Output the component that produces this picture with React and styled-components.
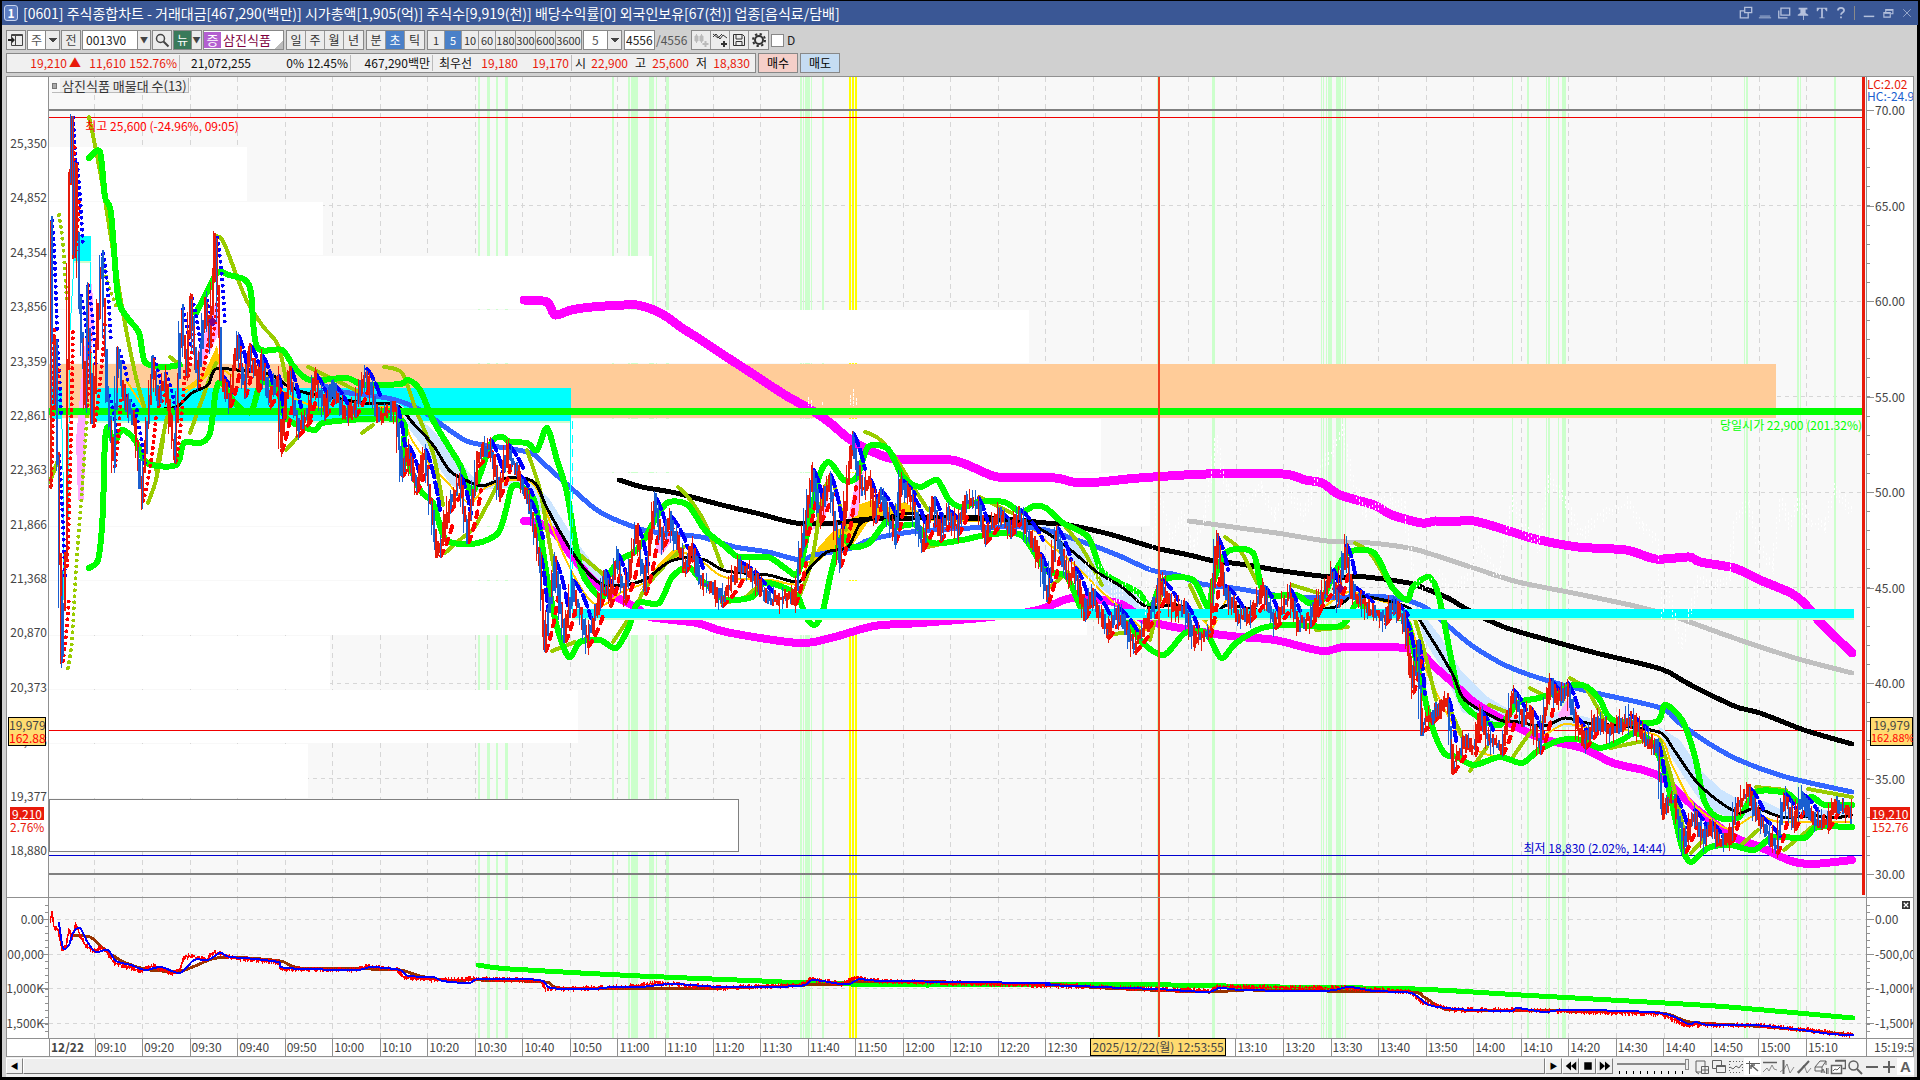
import React from 'react';
import styled, { createGlobalStyle } from 'styled-components';

const GlobalStyle = createGlobalStyle`
  * { box-sizing: border-box; }
  html, body { margin: 0; background: #000; }
  body, button, input, select {
    font-family: "Noto Sans CJK KR", "Liberation Sans", sans-serif;
    font-size: 12px;
    line-height: 16px;
    color: #222;
  }
  button, input, select { margin: 0; padding: 0; border-radius: 0; }
`;

// ---------- chart data ----------

const PRICE = [
  [50, 480], [51, 225], [54, 400], [56, 345], [58, 460], [62, 655], [66, 560], [70, 177], [72, 122], [74, 250],
  [76, 168], [80, 300], [86, 400], [87, 290], [93, 420], [102, 258], [108, 400], [114, 460], [118, 355],
  [125, 400], [135, 420], [142, 495], [153, 363], [158, 400], [165, 378], [175, 455], [182, 313], [187, 370],
  [191, 303], [198, 380], [206, 305], [210, 340], [216, 242], [222, 380], [230, 400], [238, 340], [245, 390],
  [250, 350], [258, 385], [262, 360], [270, 400], [278, 380], [281, 445], [290, 373], [298, 430], [308, 415],
  [315, 378], [325, 410], [333, 388], [345, 415], [355, 410], [366, 373], [378, 415], [396, 410], [402, 470],
  [408, 450], [416, 486], [425, 454], [437, 548], [440, 550], [450, 505], [460, 480], [468, 536], [478, 460],
  [490, 444], [500, 490], [508, 449], [520, 480], [530, 505], [540, 560], [545, 645], [555, 565], [565, 635],
  [573, 585], [588, 640], [600, 600], [605, 575], [610, 600], [617, 558], [625, 596], [637, 530], [645, 588],
  [655, 502], [663, 540], [670, 520], [685, 566], [692, 549], [700, 580], [712, 588], [722, 600], [740, 566],
  [755, 580], [770, 600], [795, 598], [803, 540], [813, 474], [820, 516], [830, 479], [840, 560], [853, 438],
  [862, 490], [870, 484], [875, 516], [880, 494], [895, 536], [901, 484], [912, 500], [923, 543], [934, 502],
  [940, 535], [948, 514], [958, 528], [966, 502], [978, 502], [985, 537], [998, 514], [1010, 530], [1020, 514],
  [1040, 558], [1048, 596], [1057, 532], [1068, 578], [1075, 572], [1085, 612], [1092, 594], [1108, 632],
  [1118, 612], [1135, 646], [1148, 622], [1162, 584], [1175, 610], [1185, 607], [1195, 641], [1210, 630],
  [1217, 541], [1225, 590], [1240, 618], [1250, 615], [1264, 591], [1275, 622], [1290, 594], [1297, 623],
  [1310, 620], [1318, 604], [1333, 574], [1338, 600], [1346, 549], [1352, 590], [1370, 610], [1385, 618],
  [1393, 604], [1405, 622], [1413, 686], [1418, 645], [1422, 726], [1435, 712], [1448, 703], [1453, 766],
  [1465, 742], [1475, 748], [1479, 714], [1490, 740], [1502, 748], [1513, 694], [1523, 720], [1530, 712],
  [1540, 747], [1550, 684], [1558, 700], [1567, 687], [1575, 720], [1585, 742], [1597, 719], [1610, 730],
  [1630, 719], [1645, 738], [1658, 748], [1663, 812], [1668, 802], [1675, 800], [1685, 846], [1694, 814],
  [1705, 838], [1712, 827], [1720, 843], [1732, 835], [1737, 804], [1749, 792], [1760, 820], [1777, 847],
  [1785, 798], [1795, 823], [1802, 798], [1815, 820], [1828, 823], [1836, 804], [1852, 814],
];

const BAND_UPPER = 'M524 300L547 302 555 315 571 310 592 307 624 305 637 305 654 310 667 317 682 328 698 338 722 354 759 378 785 395 808 408 829 422 848 438 869 450 895 459 951 460 977 469 998 477 1055 478 1073 482 1099 482 1139 478 1206 474 1283 474 1305 480 1322 483 1340 495 1374 505 1392 515 1422 523 1435 521 1448 522 1474 521 1509 531 1535 539 1578 547 1626 550 1656 559 1689 557 1700 562 1734 568 1760 580 1791 593 1804 603 1821 623 1852 653';
const BAND_LOWER = 'M524 521L539 523 555 533 571 555 588 575 604 590 616 597 637 608 650 617 697 623 726 632 798 643 831 638 874 626 920 623 991 617 1038 610 1067 599 1084 598 1118 603 1134 612 1147 621 1202 632 1240 637 1275 640 1322 651 1344 647 1392 647 1418 651 1435 667 1452 682 1474 702 1509 723 1543 739 1582 748 1613 763 1643 770 1663 778 1678 792 1700 812 1734 837 1760 847 1791 861 1812 864 1852 860';
const MA_LONG = 'M619 480L642 487 676 493 722 505 760 514 796 523 836 523 869 519 916 518 991 518 1046 523 1063 524 1105 533 1139 543 1160 549 1189 555 1214 561 1240 564 1283 571 1331 577 1366 577 1409 583 1426 589 1448 598 1470 611 1504 627 1548 640 1596 653 1661 669 1687 683 1734 706 1760 713 1804 730 1852 744';
const MA_GRAY = 'M1189 521L1240 528 1283 534 1327 541 1370 543 1409 548 1431 554 1474 568 1518 582 1578 594 1639 607 1678 618 1734 638 1795 658 1852 673';
const MA_BLUE = 'M325 386L343 392 367 395 396 400 424 412 445 427 469 442 506 448 531 453 543 463 571 488 600 512 640 529 663 533 701 537 735 547 768 552 800 560 815 555 852 548 869 540 911 532 970 528 1021 527 1046 530 1071 538 1097 547 1122 557 1151 570 1177 575 1202 584 1240 589 1275 595 1327 598 1370 596 1405 600 1426 608 1448 626 1474 647 1509 667 1552 682 1596 693 1661 708 1678 722 1708 743 1739 760 1786 777 1852 792';
const MA_SHORT = 'M150 410L176 407 192 393 208 385 216 369 245 371 261 372 278 378 286 385 310 394 347 400 363 403 396 405 412 422 433 445 449 470 465 480 482 486 494 482 514 477 535 483 547 508 571 550 588 573 604 585 625 585 646 579 667 563 684 558 705 560 726 571 768 575 798 582 810 568 827 552 848 547 861 523 886 517 911 513 928 517 1021 522 1042 530 1067 547 1097 572 1122 587 1147 607 1177 605 1210 616 1227 605 1257 610 1296 612 1335 607 1353 596 1374 598 1409 608 1426 630 1452 673 1465 700 1500 720 1518 722 1544 726 1565 718 1587 723 1630 727 1661 733 1674 750 1695 780 1717 800 1739 813 1756 808 1782 817 1817 816 1834 818 1852 815';
const YELLOW = 'M126 380L146 412M186 392L204 378 214 355 222 368 232 376M258 365L285 393 320 408 360 410 396 408 412 440 430 465 445 480 469 503 485 488 512 480 535 486 555 535 571 570 588 598 602 606 622 592 646 582 660 564 676 551 700 560 724 577 770 580 798 584 808 562M928 520L1020 524 1050 545 1075 565 1100 590 1125 612 1146 630 1165 610 1200 618 1212 628 1226 600M1320 610L1348 592 1372 598 1405 612 1420 655 1440 700 1460 735 1480 752 1500 757M1545 735L1565 724 1590 728 1656 735 1672 765 1690 800 1710 818 1730 829 1756 815 1780 822 1850 822';
const CLOUD = 'M396 402L414 414 433 430 452 453 474 478 484 484 500 476 530 478 550 500 575 540 592 562 606 576 626 586 604 600 588 588 568 556 545 518 526 488 495 488 476 492 452 486 430 456 410 430ZM1040 522L1080 545 1106 573 1134 592 1150 606 1146 622 1122 604 1096 585 1066 560ZM1415 604L1440 636 1462 672 1486 696 1520 716 1545 717 1560 711 1590 718 1590 727 1520 728 1486 722 1462 712 1444 672 1424 640ZM1658 726L1680 740 1700 770 1722 790 1745 803 1764 801 1786 812 1850 809 1850 818 1764 813 1735 820 1705 808 1686 780 1668 752Z';

const ENVELOPE_UPPER = 'M89 158L100 152 105 197 111 213 118 297 127 317 139 333 145 362 163 367 180 365M196 313L208 290 218 272 229 275 245 280 251 293 257 347 282 350 294 367 310 380 347 378 363 385 400 384 408 380 420 390 433 420 449 447 461 467 471 493 478 480 492 442 502 437 510 442 527 443 537 450 547 428 557 460 567 493 576 547 584 577 602 598 608 577 620 560 633 553 642 543 659 513 669 502 688 505 705 530 726 547 739 557 768 557 785 568 798 573 808 530 819 477 829 462 844 480 857 477 868 447 888 449 903 477 920 487 937 480 949 500 962 507 979 502 1004 502 1021 512 1034 506 1046 508 1063 523 1088 537 1101 570 1118 582 1139 593 1151 607 1164 580 1193 580 1208 607 1214 580 1227 552 1253 553 1264 593 1296 595 1309 603 1322 600 1331 580 1348 553 1374 553 1392 587 1407 600 1413 587 1429 577 1439 597 1452 663 1461 700 1478 717 1500 725 1518 703 1539 698 1561 690 1574 685 1587 687 1600 700 1613 720 1656 722 1665 705 1682 720 1695 757 1704 800 1717 817 1739 817 1756 792 1786 793 1799 802 1812 797 1825 805 1852 805';
const ENVELOPE_LOWER = 'M89 568L98 560 102 527 104 477 105 440 108 427 114 443 122 430 135 440 147 463 176 465 184 443 200 443 210 433 216 390 222 383 235 403 251 412 261 383 278 390 286 418 314 430 327 422 400 420 404 450 420 490 433 503 443 535 453 543 478 543 498 533 506 510 512 487 522 487 535 503 547 577 557 627 569 657 580 642 600 640 616 648 629 627 638 603 659 603 672 577 688 567 701 580 714 590 726 600 752 597 764 583 785 588 798 597 806 617 815 625 823 610 831 573 842 537 852 547 869 543 886 522 895 527 916 525 932 543 962 540 987 535 1021 535 1046 570 1067 577 1084 613 1105 613 1126 620 1143 643 1164 655 1185 633 1206 633 1221 658 1236 643 1262 628 1292 625 1340 626 1357 603 1370 613 1405 620 1413 647 1431 723 1444 753 1457 757 1474 765 1500 757 1522 763 1539 750 1561 740 1582 740 1600 748 1622 740 1635 733 1652 743 1665 773 1674 813 1682 847 1691 862 1708 848 1730 845 1754 850 1773 837 1804 838 1817 827 1852 827';
const OLIVE_DOTS = 'M59 215L63 245 67 303M68 668L72 640 76 570 82 490 88 403M103 265L110 290 118 310';
const OLIVE = 'M89 117L96 150 105 200 122 307 135 373 145 410M50 482L58 460M156 470L167 417M148 503L156 480 163 440M190 433L208 383 216 363M216 236L224 243 245 297 262 325 278 345 286 380M170 357L180 365M286 450L304 430M308 367L335 380 359 392M362 433L373 425M384 367L402 373 416 410 433 453 443 505M445 553L462 538 476 525 500 480M527 450L540 490 548 535 556 580M552 651L575 642M580 555L604 575M613 642L634 610 646 587 667 563 684 547M678 487L688 497 705 523 722 567M722 603L744 598 760 584M798 600L812 560 822 500 832 480 846 530M865 432L878 438 895 457 912 485 928 510M928 547L958 540M979 497L1012 513M1050 587L1068 572M1060 520L1082 548 1102 585M1109 635L1139 630M1150 640L1162 590M1190 585L1206 620M1225 537L1240 550 1257 583M1292 585L1318 593M1316 630L1348 627M1355 543L1370 553 1387 580M1413 613L1424 650 1436 700M1448 705L1465 743M1470 771L1487 747M1489 705L1509 713M1513 757L1530 733 1543 722M1530 688L1543 695M1570 678L1587 690 1604 720M1610 748L1648 740M1660 740L1672 780 1686 840M1691 853L1705 838M1739 847L1758 830M1756 787L1786 790M1808 789L1852 797M1784 850L1812 827';

const PINK_ZONES = 'M76 440L84 350 92 280 94 330 86 400 84 500 78 500ZM194 362L206 330 217 298 220 330 210 352 196 374ZM655 550L664 522 672 540 662 555ZM812 530L822 500 830 488 824 525ZM848 520L856 480 864 470 858 515ZM1558 715L1568 698 1578 712 1560 720Z';

const GHOST = [
  [1085, 560], [1095, 585], [1105, 560], [1116, 600], [1130, 580], [1146, 610], [1160, 490], [1172, 540],
  [1184, 515], [1194, 550], [1205, 520], [1217, 440], [1228, 490], [1240, 510], [1262, 487], [1275, 517], [1288, 490],
  [1305, 517], [1322, 467], [1333, 453], [1344, 430], [1353, 480], [1366, 513], [1392, 500], [1405, 507],
  [1413, 567], [1422, 593], [1439, 573], [1452, 593], [1470, 577], [1478, 543], [1500, 577], [1513, 500],
  [1522, 523], [1539, 547], [1550, 477], [1565, 497], [1582, 537], [1600, 517], [1630, 503], [1643, 527],
  [1658, 540], [1663, 613], [1669, 587], [1682, 647], [1700, 580], [1717, 587], [1730, 577], [1736, 523],
  [1749, 503], [1760, 547], [1773, 567], [1782, 500], [1791, 527], [1799, 500], [1812, 523], [1825, 527],
  [1836, 490], [1852, 510],
];

const SUB_BLUE = 'M59 923L63 948 69 945 73 933 80 928 88 943 96 952 108 950 116 961 131 965 145 970 161 967 180 973 194 960 208 960 220 953 229 957 245 958 278 962 286 968 355 970 371 967 400 970 408 976 433 977 443 981 469 983 480 979 539 980 551 988 592 989 612 987 640 987 673 984 722 987 799 986 813 980 840 984 850 984 860 979 885 981 1040 983 1048 985 1105 987 1118 988 1158 989 1207 992 1220 988 1244 990 1325 991 1349 987 1374 991 1411 993 1429 1005 1456 1009 1509 1011 1517 1008 1545 1012 1566 1010 1660 1013 1688 1024 1696 1022 1709 1025 1753 1025 1802 1030 1831 1034 1853 1035';
const SUB_BROWN = 'M73 936L90 937 105 950 120 960 134 966 150 970 180 971 195 966 212 959 230 957 280 961 300 968 370 969 400 970 420 976 445 980 480 980 545 982 560 988 640 988 722 988 805 985 840 984 870 981 1040 984 1105 988 1207 992 1244 990 1325 991 1411 992 1424 997 1440 1007 1460 1010 1566 1011 1660 1013 1690 1022 1753 1026 1802 1030 1853 1035';
const SUB_GREEN = 'M478 965L510 969 640 976 762 981 807 983 926 985 1007 984 1171 985 1280 987 1415 989 1521 995 1647 1002 1729 1007 1853 1018';
const SUB_PRICE = [
  [50, 922], [52, 912], [54, 926], [58, 930], [62, 950], [66, 945], [69, 930], [72, 938], [76, 924], [80, 935],
  [85, 945], [94, 951], [101, 948], [108, 953], [114, 963], [142, 971], [153, 966], [172, 973], [180, 969],
  [184, 957], [191, 956], [206, 960], [214, 952], [221, 954], [232, 958], [278, 962], [281, 969], [355, 970],
  [366, 966], [398, 970], [403, 977], [437, 980], [480, 979], [541, 981], [546, 989], [603, 988], [637, 986],
  [655, 983], [720, 988], [800, 985], [812, 979], [842, 984], [853, 978], [880, 981], [1100, 987], [1210, 991],
  [1217, 987], [1340, 988], [1410, 992], [1422, 1002], [1452, 1010], [1510, 1010], [1660, 1014], [1686, 1025],
  [1756, 1025], [1852, 1035],
];

const SIGNAL_STRIPS = [
  [478, 2], [487, 3], [496, 2], [505, 3], [612, 2], [628, 2], [631, 7], [649, 5], [656, 1], [666, 3], [800, 2],
  [803, 1], [805, 5], [811, 1], [822, 2], [1157, 2], [1212, 3], [1321, 1], [1323, 1], [1326, 1], [1328, 4],
  [1336, 5], [1342, 1], [1345, 1], [1512, 1], [1527, 2], [1546, 1], [1548, 2], [1558, 1], [1562, 4], [1744, 1],
  [1746, 2], [1797, 2], [1800, 1], [1834, 2],
];
const YELLOW_STRIPS = [[849, 2], [852, 2], [855, 2]];

const VOLUME_BANDS = [
  [147, 54, 247], [202, 53, 323], [256, 53, 652], [310, 53, 1029], [419, 53, 1101], [473, 53, 1150],
  [527, 53, 1010], [581, 54, 1087], [636, 53, 330], [690, 53, 578], [744, 54, 308],
];

const LEFT_PRICES = ['25,350', '24,852', '24,354', '23,856', '23,359', '22,861', '22,363', '21,866', '21,368', '20,870', '20,373', '19,875', '19,377', '18,880'];
const RIGHT_SCALE = ['70.00', '65.00', '60.00', '55.00', '50.00', '45.00', '40.00', '35.00', '30.00'];
const TIMES = Array.from({ length: 37 }, (_, i) => {
  const m = 550 + i * 10;
  return `${String(Math.floor(m / 60)).padStart(2, '0')}:${String(m % 60).padStart(2, '0')}`;
});
const GRID_X = TIMES.map((_, i) => Math.round(94.4 + i * 47.55));

// the cursor time covers these
const COVERED_TIMES = ['12:40', '12:50', '13:00'];

// ---------- path builders ----------

function makeRandom(seed) {
  let s = seed;
  return () => {
    s = (s * 1664525 + 1013904223) % 4294967296;
    return s / 4294967296;
  };
}

function buildBars(points, step, spread, seed) {
  const rand = makeRandom(seed);
  let up = '';
  let down = '';
  for (let i = 1; i < points.length; i++) {
    const [x0, y0] = points[i - 1];
    const [x1, y1] = points[i];
    for (let x = x0; x < x1; x += step) {
      const y = y0 + ((y1 - y0) * (x - x0)) / (x1 - x0);
      const next = y0 + ((y1 - y0) * Math.min(1, (x + step - x0) / (x1 - x0)));
      const top = Math.min(y, next) - rand() * spread;
      const bottom = Math.max(y, next) + rand() * spread;
      const bar = `M${x + 0.5} ${Math.round(top)}V${Math.round(bottom)}`;
      if (rand() < (y1 < y0 ? 0.62 : 0.46)) up += bar;
      else down += bar;
    }
  }
  return { up, down };
}

// trailing stops: above price on the way down, below it on the way up
function buildStops(points) {
  let above = '';
  let below = '';
  for (let i = 1; i < points.length; i++) {
    const [x0, y0] = points[i - 1];
    const [x1, y1] = points[i];
    const dx = x1 - x0;
    const dy = y1 - y0;
    if (Math.abs(dy) < 14) continue;
    const cx = Math.round(x0 + dx * 0.6 + 2);
    const cy = Math.round(y0 + dy * 0.15);
    const end = `Q${cx} ${cy} ${Math.round(x1 + 3)} ${Math.round(y0 + dy * 0.6)}`;
    if (dy > 0) above += `M${x0 + 1} ${y0 - 4}${end}`;
    else below += `M${x0 + 1} ${y0 + 6}${end}`;
  }
  return { above, below };
}

// rounds the corners of every run of points in a path
function smooth(d) {
  return d.split('M').filter(Boolean).map((run) => {
    const n = run.match(/\d+/g).map(Number);
    const pts = [];
    for (let i = 0; i < n.length; i += 2) pts.push([n[i], n[i + 1]]);
    let out = `M${pts[0][0]} ${pts[0][1]}`;
    for (let i = 0; i < pts.length - 1; i++) {
      const a = pts[i - 1] || pts[i];
      const b = pts[i];
      const c = pts[i + 1];
      const e = pts[i + 2] || c;
      const c1 = [b[0] + (c[0] - a[0]) / 7, b[1] + (c[1] - a[1]) / 7];
      const c2 = [c[0] - (e[0] - b[0]) / 7, c[1] - (e[1] - b[1]) / 7];
      out += `C${c1[0].toFixed(1)} ${c1[1].toFixed(1)} ${c2[0].toFixed(1)} ${c2[1].toFixed(1)} ${c[0]} ${c[1]}`;
    }
    return out;
  }).join('');
}

const bars = buildBars(PRICE, 2, 10, 7);
const wicks = buildBars(PRICE, 3, 15, 99);
const subBars = buildBars(SUB_PRICE, 1, 3, 21);
const earlyStops = buildStops(PRICE.filter((p) => p[0] <= 225));
const lateStops = buildStops(PRICE.filter((p) => p[0] >= 222));
const ghostBars = buildBars(GHOST, 3, 7, 5);

const Line = ({ d, color, width, ...rest }) => (
  <path d={smooth(d)} fill="none" stroke={color} strokeWidth={width} strokeLinecap="round" strokeLinejoin="round" {...rest} />
);

const Stops = ({ d, color, dash }) => (
  <path d={d} fill="none" stroke={color} strokeWidth="4" strokeLinecap="round" strokeDasharray={dash} />
);

const Strips = ({ top, height }) => (
  <>
    {GRID_X.map((x) => <path key={x} d={`M${x + 0.5} ${top}v${height}`} stroke="#d6d6d6" strokeDasharray="5 4" />)}
    {SIGNAL_STRIPS.map(([x, w]) => <rect key={x} x={x} y={top} width={w} height={height} fill="#ccffcc" />)}
    {YELLOW_STRIPS.map(([x, w]) => <rect key={x} x={x} y={top} width={w} height={height} fill="#ffff00" />)}
  </>
);

const MainPlot = () => (
  <PlotSvg viewBox="49 77 1817 820" preserveAspectRatio="none" aria-label="가격 차트">
    <rect x="49" y="77" width="1817" height="820" fill="#f8f8f8" />
    {[205, 301, 396, 492, 587, 683, 778].map((y) => (
      <path key={y} d={`M49 ${y + 0.5}H1862`} stroke="#d6d6d6" strokeDasharray="4 4" />
    ))}
    <Strips top={77} height={820} />
    {VOLUME_BANDS.map(([y, h, right]) => <rect key={y} x="49" y={y} width={right - 49} height={h} fill="#fff" />)}
    <rect x="49" y="799" width="689" height="52" fill="#fff" stroke="#808080" />
    <rect x="49" y="364" width="1727" height="54" fill="#ffcc99" />
    <path d="M49 110H1862M49 874H1862" stroke="#808080" strokeWidth="2" />
    <path d="M49 117.5H1862M49 730.5H1862" stroke="#f00000" />
    <path d="M49 855.5H1862" stroke="#0000d0" />

    <rect x="73" y="236" width="18" height="26" fill="#00ffff" />
    <path d="M74 262H91" stroke="#ccffcc" strokeWidth="2" />
    <path d="M90 262V320L93 400M74 262L70 330 68 520 63 600M50 387H61L63 470 64 590" fill="none" stroke="#00ffff" strokeWidth="1" />
    <rect x="50" y="387" width="11" height="32" fill="#00ffff" />
    <path d="M96 388H571V421H96Z" fill="#00ffff" />
    <path d="M96 422H571" stroke="#ccffcc" strokeWidth="2" />

    <path d={CLOUD} fill="#cce5ff" />
    <path d="M182 390L204 374 217 345 220 362 208 376 194 388ZM640 590L660 562 672 550 684 555 668 562ZM806 572L818 548 832 532 846 526 858 505 872 500 884 508 905 502 920 513 911 515 886 518 868 522 852 546 832 550Z" fill="#ffcc00" />
    <path d={PINK_ZONES} fill="#ffaaff" />
    <Line d={BAND_UPPER} color="#ff00ff" width="9" />
    <Line d={BAND_LOWER} color="#ff00ff" width="8" />
    <Line d={YELLOW} color="#ffcc00" width="2" />
    <Line d={MA_GRAY} color="#c0c0c0" width="5" />
    <Line d={MA_BLUE} color="#3366ff" width="5" />
    <Line d={MA_LONG} color="#000" width="5" />
    <Line d={OLIVE} color="#99cc00" width="4" />
    <Line d={OLIVE_DOTS} color="#99cc00" width="4" strokeDasharray="0 6" />
    <Line d={ENVELOPE_UPPER} color="#00ff00" width="6" />
    <Line d={ENVELOPE_LOWER} color="#00ff00" width="6" />
    <Line d={MA_SHORT} color="#000" width="3" />

    <path d="M49 411.5H1862" stroke="#00ff00" strokeWidth="7" />
    <path d="M570 421V610" stroke="#00ffff" />
    <path d="M572 421V610" stroke="#00ffff" strokeDasharray="8 6" />
    <path d="M572 609H1854V618H572Z" fill="#00ffff" />
    <path d="M572 618.5H1854" stroke="#ccffcc" strokeWidth="2" />

    <path d={ghostBars.up} stroke="#fff" strokeDasharray="3 2" />
    <path d={ghostBars.down} stroke="#fff" strokeDasharray="2 3" />
    <path d="M808 397V406M811 400V407M822 402V405M850 395V405M853 389V406M856 398V406" stroke="#fff" strokeDasharray="3 1" />

    <Stops d={earlyStops.above} color="#0000ff" dash="0 6" />
    <Stops d={earlyStops.below} color="#ff0000" dash="0 6" />
    <Stops d={lateStops.above} color="#0000ff" dash="12 5" />
    <Stops d={lateStops.below} color="#ff0000" dash="6 7" />
    <path d={bars.up} stroke="#e61a0a" strokeWidth="2" />
    <path d={bars.down} stroke="#1a5fd0" strokeWidth="2" />
    <path d={wicks.up} stroke="#e61a0a" />
    <path d={wicks.down} stroke="#1a5fd0" />
    <path d="M208 321l4-4 4 4-4 6zM1336 588l4-4 4 4-4 6z" fill="#800080" />
    <path d="M1159 77V897" stroke="#f04020" strokeWidth="2" />
    <path d="M1863.5 77V895" stroke="#e81a0a" strokeWidth="3" />
  </PlotSvg>
);

const SubPlot = () => (
  <PlotSvg viewBox="49 898 1817 140" preserveAspectRatio="none" aria-label="보조 지표">
    <rect x="49" y="898" width="1817" height="140" fill="#f8f8f8" />
    {[919, 954, 988, 1023].map((y) => (
      <path key={y} d={`M49 ${y + 0.5}H1866`} stroke="#d6d6d6" strokeDasharray="4 4" />
    ))}
    <Strips top={898} height={140} />
    <Line d={SUB_GREEN} color="#00ff00" width="5" />
    <Line d={SUB_BROWN} color="#993300" width="3" />
    <path d={subBars.up} stroke="#ff0000" />
    <path d={subBars.down} stroke="#ff0000" />
    <Line d={SUB_BLUE} color="#0000ff" width="2" />
    <path d="M1159 898V1037" stroke="#f04020" strokeWidth="2" />
  </PlotSvg>
);

const AxisTicks = ({ side, marks, minors, top, height }) => {
  const edge = side === 'left' ? 42 : 0;
  const dir = side === 'left' ? -1 : 1;
  return (
    <TickSvg viewBox={`0 ${top} 42 ${height}`} preserveAspectRatio="none" $side={side} aria-hidden="true">
      {minors.map((y) => <path key={y} d={`M${edge} ${y + 0.5}h${dir * 3}`} stroke="#909090" />)}
      {marks.map((y) => <path key={y} d={`M${edge} ${y + 0.5}h${dir * 7}`} stroke="#909090" />)}
    </TickSvg>
  );
};

const range = (from, step, count) => Array.from({ length: count }, (_, i) => Math.round(from + i * step));

// ---------- small icons ----------

const Glyph = ({ children, size = 16 }) => (
  <svg width={size} height={size} viewBox="0 0 16 16" fill="none" stroke="currentColor" aria-hidden="true">{children}</svg>
);

const TITLE_ICONS = [
  ['창 분리', <><path d="M6.5 1.5h8v6h-8z" strokeWidth="1.5" /><path d="M6 5.5H1.5v8h9V8" strokeWidth="1.5" /></>],
  ['접기', <path d="M2 11.5h12M1 13.5h14" />],
  ['창 복사', <><path d="M4.5 2.5h10v8h-10z" strokeWidth="1.5" /><path d="M2 5v8.5h10" strokeWidth="1.5" /></>],
  ['고정', <path d="M3 2h10v2h-2v4l3 2v1H9v5H8v-5H2v-1l3-2V4H3z" fill="currentColor" stroke="none" />],
  ['글꼴', <path d="M2 2h12v4h-1l-2-3H9v10h2v1H5v-1h2V3H5L3 6H2z" fill="currentColor" stroke="none" />],
  ['도움말', <><path d="M4.5 5c0-4 7-4 7 0 0 2.5-3.500 2.500-3.500 5" strokeWidth="2" /><path d="M7 12h2v2H7z" fill="currentColor" stroke="none" /></>],
];
const WINDOW_ICONS = [
  ['최소화', <path d="M1 12.5h14" strokeWidth="2" />],
  ['이전 크기로', <><path d="M5 7V3.5h9.5V9H12M2.500 7.500H11v6H2.500z" strokeWidth="1.500" /><path d="M5 4h9M3 8h8" strokeWidth="2" /></>],
  ['닫기', <path d="M3 3l10 10M13 3L3 13" />],
];

const BOTTOM_TOOLS = [
  ['차트 추가', <><path d="M11 7V2H2v11h5M2 13L5 15" /><path d="M7.500 7.500h7v7h-7zM11 8v6M8 11h6" /></>],
  ['차트 복제', <><path d="M1.500 1.500h9v8h-9z" /><path d="M5.500 6.500h9v7h-9z" fill="#f0f0f0" /><path d="M6 7h8" strokeWidth="2" /></>],
  ['구간 보기', <><path d="M1.500 2v12M14.500 2v12M2 2.500h12M2 13.500h12" strokeDasharray="1 2" /><path d="M2 8l3 2 3-3 3 2 3-4" /></>],
  ['십자선', <><path d="M1 4.500h14M4.500 2v13" /><path d="M6 6l7 6M6 6v4M6 6h4" strokeWidth="1.500" /></>],
  ['수평선', <><path d="M1 3.500h14" strokeWidth="1.500" /><path d="M1 13l4-4 2 3 3-6 2 4 3 1" opacity=".7" /></>],
  ['수직선', <><path d="M4.500 1v14" strokeWidth="2" /><path d="M1 13l4-3 3-5 3 9 4-6" opacity=".7" /></>],
  ['추세선', <><path d="M2 14L13 2" strokeWidth="2" /><path d="M1 13l4-3 3-4 3 8 4-5" opacity=".7" /></>],
  ['모두 지우기', <><path d="M2 8l5-6h6l-4 6v4H2zM2 8h7M13 2v4" /><path d="M8 14l2-4 2 4M9 13h2M13.500 9v6M15 9v6" /></>],
  ['차트 저장', <><path d="M5.500 1.500h10v8h-3M5 2h10" strokeWidth="1.500" /><path d="M1.500 6.500h10v8h-10z" fill="#fff" strokeWidth="1.500" /><path d="M3 12l2-2 2 1 3-3" /></>],
  ['확대경', <><circle cx="6.500" cy="6.500" r="4.500" strokeWidth="1.500" /><path d="M10 10l5 5" strokeWidth="2" /></>],
  ['축소', <path d="M2 8h12" strokeWidth="2" />],
  ['확대', <path d="M2 8h12M8 2v12" strokeWidth="2" />],
];

const App = () => (
  <Frame>
    <GlobalStyle />
    <TitleBar>
      <WindowNumber>1</WindowNumber>
      <Title>[0601] 주식종합차트 - 거래대금[467,290(백만)] 시가총액[1,905(억)] 주식수[9,919(천)] 배당수익률[0] 외국인보유[67(천)] 업종[음식료/담배]</Title>
      <TitleButtons>
        {TITLE_ICONS.map(([name, icon]) => <TitleButton key={name} aria-label={name}><Glyph size={14}>{icon}</Glyph></TitleButton>)}
        <Separator />
        {WINDOW_ICONS.map(([name, icon]) => <TitleButton key={name} aria-label={name}><Glyph size={12}>{icon}</Glyph></TitleButton>)}
      </TitleButtons>
    </TitleBar>

    <Workspace>
      <Toolbar>
        <ToolButton $width={20} aria-label="패널">
          <Glyph><path d="M3.500 2.500h11v11h-11zM4 3.500h10M7.500 4v9" /><path d="M0 7h4V5l3 3-3 3V9H0z" fill="#222" stroke="none" /></Glyph>
        </ToolButton>
        <Picker $width={33} aria-label="종목 구분"><option>주</option></Picker>
        <ToolButton $width={20}>전</ToolButton>
        <CodeGroup>
          <CodeInput aria-label="종목 코드" defaultValue="0013V0" />
          <DropButton aria-label="최근 종목">▼</DropButton>
        </CodeGroup>
        <ToolButton $width={20} aria-label="종목 검색">
          <Glyph><circle cx="6.500" cy="6.500" r="4" strokeWidth="1.500" /><path d="M9.500 9.500l5 5" strokeWidth="2" /></Glyph>
        </ToolButton>
        <CodeGroup>
          <NewsButton>뉴</NewsButton>
          <DropButton aria-label="뉴스 목록" $narrow>▼</DropButton>
        </CodeGroup>
        <StockName>
          <Margin>증</Margin>
          <span>삼진식품</span>
        </StockName>
        <Segments>
          {['일', '주', '월', '년'].map((t) => <Segment key={t}>{t}</Segment>)}
        </Segments>
        <Segments>
          {['분', '초', '틱'].map((t) => <Segment key={t} $active={t === '초'}>{t}</Segment>)}
        </Segments>
        <Segments>
          {['1', '5', '10', '60', '180', '300', '600', '3600'].map((t) => (
            <NumberSegment key={t} $digits={t.length} $active={t === '5'}>{t}</NumberSegment>
          ))}
        </Segments>
        <Picker $width={39} $center aria-label="주기"><option>5</option></Picker>
        <CountInput aria-label="표시 봉 수" defaultValue="4556" />
        <Total>/4556</Total>
        <Segments>
          <Segment $faint aria-label="봉 추가"><Glyph><path d="M2 4h3v5H2zM7 4h3v5H7zM3.500 2v9M8.500 2v9" fill="currentColor" /><path d="M12.500 9v6M9.500 12h6" strokeWidth="2" /></Glyph></Segment>
          <Segment aria-label="지표 추가"><Glyph><path d="M1 5l3-3 4 5 3-4 4 3M1 2l5 4 4-4" /><path d="M12 9v6M9 12h6" strokeWidth="2" /></Glyph></Segment>
          <Segment aria-label="저장"><Glyph><path d="M2.500 2.500h9l2 2v9h-11zM5 3v4h6V3M5 14V9.500h6V14" /></Glyph></Segment>
          <Segment aria-label="설정"><Glyph><circle cx="8" cy="8" r="4" strokeWidth="2" /><circle cx="8" cy="8" r="6" strokeWidth="2" strokeDasharray="2.300 2.400" /></Glyph></Segment>
        </Segments>
        <CheckLabel><input type="checkbox" />D</CheckLabel>
      </Toolbar>

      <InfoRow>
        <Quote>
          <Cell $width={60} $up>19,210</Cell>
          <Cell $width={14} $up>▲</Cell>
          <Cell $width={45} $up>11,610</Cell>
          <Cell $width={54} $up $line>152.76%</Cell>
          <Cell $width={71}>21,072,255</Cell>
          <Cell $width={53}>0%</Cell>
          <Cell $width={47} $line>12.45%</Cell>
          <Cell $width={82} $line>467,290백만</Cell>
          <Cell $width={39}>최우선</Cell>
          <Cell $width={46} $up>19,180</Cell>
          <Cell $width={54} $up $line>19,170</Cell>
          <Cell $width={14}>시</Cell>
          <Cell $width={42} $up>22,900</Cell>
          <Cell $width={18}>고</Cell>
          <Cell $width={43} $up>25,600</Cell>
          <Cell $width={18}>저</Cell>
          <Cell $width={43} $up>18,830</Cell>
        </Quote>
        <OrderButton $color="#f5cfc9">매수</OrderButton>
        <OrderButton $color="#c5dcf2">매도</OrderButton>
      </InfoRow>

      <ChartFrame>
        <Axis $side="left">
          <AxisLabels $side="left" $top={58} $bottom={39}>
            {LEFT_PRICES.map((p) => <li key={p}>{p}</li>)}
          </AxisLabels>
          <CursorTag $side="left"><span>19,979</span><em>162.88</em></CursorTag>
          <PriceTag $side="left"><strong>9,210</strong><em>2.76%</em></PriceTag>
        </Axis>
        <Plot>
          <MainPlot />
          <Legend><i />삼진식품 매물대 수(13)</Legend>
          <HighNote>최고 25,600 (-24.96%, 09:05)</HighNote>
          <OpenNote>당일시가 22,900 (201.32%)</OpenNote>
          <LowNote>최저 18,830 (2.02%, 14:44)</LowNote>
        </Plot>
        <Axis $side="right">
          <AxisTicks side="right" marks={range(110, 95.5, 9)} minors={range(129, 19.1, 39)} top={77} height={820} />
          <AxisLabels $side="right" $top={25} $bottom={15}>
            {RIGHT_SCALE.map((p) => <li key={p}>{p}</li>)}
          </AxisLabels>
          <RangeNote><em>LC:2.02</em><span>HC:-24.9</span></RangeNote>
          <CursorTag $side="right"><span>19,979</span><em>162.88%</em></CursorTag>
          <PriceTag $side="right"><strong>19,210</strong><em>152.76</em></PriceTag>
        </Axis>

        <Axis $side="left" $sub>
          <AxisTicks side="left" marks={[919, 954, 988, 1023]} minors={range(905, 7, 19)} top={898} height={140} />
          <AxisLabels $side="left" $sub $top={13} $bottom={7}>
            <li>0.00</li><li>00,000</li><li>1,000K</li><li>1,500K</li>
          </AxisLabels>
        </Axis>
        <Plot $sub><SubPlot /></Plot>
        <Axis $side="right" $sub>
          <AxisTicks side="right" marks={[919, 954, 988, 1023]} minors={range(905, 7, 19)} top={898} height={140} />
          <AxisLabels $side="right" $top={13} $bottom={7}>
            <li>0.00</li><li>-500,00</li><li>-1,000K</li><li>-1,500K</li>
          </AxisLabels>
          <CloseSub aria-label="지표 닫기"><Glyph size={6}><path d="M2 2l12 12M14 2L2 14" strokeWidth="3" /></Glyph></CloseSub>
        </Axis>

        <TimeCorner />
        <TimeAxis>
          <TimeCell $bold>12/22</TimeCell>
          {TIMES.map((t) => <TimeCell key={t}>{COVERED_TIMES.includes(t) ? '' : t}</TimeCell>)}
          <TimeTag>2025/12/22(월) 12:53:55</TimeTag>
        </TimeAxis>
        <TimeCorner $last>15:19:5</TimeCorner>
      </ChartFrame>

      <BottomBar>
        <ScrollButton aria-label="왼쪽으로">◀</ScrollButton>
        <ScrollTrack />
        <ScrollButton aria-label="오른쪽으로">▶</ScrollButton>
        <ScrollButton aria-label="뒤로"><Glyph size={12}><path d="M8 2v12L1 8zM15 2v12L8 8z" fill="#000" stroke="none" /></Glyph></ScrollButton>
        <ScrollButton aria-label="정지"><Glyph size={12}><path d="M3 3h10v10H3z" fill="#000" stroke="none" /></Glyph></ScrollButton>
        <ScrollButton aria-label="앞으로"><Glyph size={12}><path d="M8 2v12l7-6zM1 2v12l7-6z" fill="#000" stroke="none" /></Glyph></ScrollButton>
        <Speed>
          <input type="range" min="0" max="10" defaultValue="10" aria-label="재생 속도" />
        </Speed>
        {BOTTOM_TOOLS.map(([name, icon]) => (
          <BottomTool key={name} aria-label={name} $on={name === '십자선'}><Glyph>{icon}</Glyph></BottomTool>
        ))}
        <BottomTool $on>A</BottomTool>
      </BottomBar>
    </Workspace>
  </Frame>
);

// Styled Components
const Frame = styled.div`
  height: 100vh;
  display: flex;
  flex-direction: column;
  padding: 1px 2px 3px;
  background: #000;
  overflow: hidden;
`;

const TitleBar = styled.header`
  flex: none;
  height: 24px;
  display: flex;
  align-items: center;
  gap: 5px;
  padding: 0 2px;
  background: #3a5795;
  color: #fff;
`;

const WindowNumber = styled.span`
  width: 14px;
  height: 16px;
  border: 1px solid #c8d4ee;
  border-radius: 3px;
  background: #5c7cc0;
  font-weight: 700;
  line-height: 14px;
  text-align: center;
`;

const Title = styled.h1`
  flex: 1;
  margin: 0;
  font-size: 14px;
  font-weight: 400;
  white-space: pre;
`;

const TitleButtons = styled.div`
  display: flex;
  align-items: center;
`;

const TitleButton = styled.button`
  width: 19px;
  height: 18px;
  display: flex;
  align-items: center;
  justify-content: center;
  border: 0;
  background: none;
  color: #b4c0dc;
`;

const Separator = styled.i`
  width: 1px;
  height: 14px;
  margin: 0 4px;
  background: #8a8a8a;
`;

const Workspace = styled.main`
  flex: 1;
  min-height: 0;
  display: flex;
  flex-direction: column;
  margin-right: 1px;
  padding: 5px 3px 0 4px;
  background: #d0d0d0;
`;

const Toolbar = styled.div`
  flex: none;
  height: 20px;
  display: flex;
  gap: 1px;
`;

const ToolButton = styled.button`
  width: ${({ $width }) => $width}px;
  display: flex;
  align-items: center;
  justify-content: center;
  border: 1px solid #888;
  background: #ececec;
  color: #444;
`;

const Picker = styled.select`
  width: ${({ $width }) => $width}px;
  padding: 0 14px 0 ${({ $center }) => ($center ? 8 : 3)}px;
  border: 1px solid #888;
  appearance: none;
  background:
    linear-gradient(45deg, transparent 50%, #444 50%) no-repeat right 6px center / 4px 4px,
    linear-gradient(-45deg, transparent 50%, #444 50%) no-repeat right 2px center / 4px 4px,
    linear-gradient(to right, #888 1px, #ececec 1px) no-repeat right / 14px 100%,
    #fff;
  color: #555;
`;

const CodeGroup = styled.div`
  display: flex;
  border: 1px solid #888;
`;

const CodeInput = styled.input`
  width: 54px;
  padding-left: 3px;
  border: 0;
  background: #fff;
`;

const DropButton = styled.button`
  width: ${({ $narrow }) => ($narrow ? 10 : 13)}px;
  border: 0;
  border-left: 1px solid #888;
  background: #ececec;
  color: #444;
  font-size: 8px;
`;

const NewsButton = styled.button`
  width: 17px;
  border: 0;
  background: #3a7a5a;
  color: #fff;
`;

const StockName = styled.div`
  width: 81px;
  display: flex;
  align-items: center;
  gap: 2px;
  border: 1px solid #888;
  background: linear-gradient(135deg, #fff 91%, #bbb 91%);
  color: #800040;
  font-size: 13px;
`;

const Margin = styled.span`
  width: 17px;
  height: 16px;
  background: #b35fd0;
  color: #fff;
  text-align: center;
`;

const Segments = styled.div`
  display: flex;
  margin-left: 1px;
  border: 1px solid #888;
`;

const Segment = styled.button`
  width: 19px;
  display: flex;
  align-items: center;
  justify-content: center;
  border: 0;
  border-right: 1px solid #999;
  background: ${({ $active }) => ($active ? '#4a80c8' : '#ececec')};
  color: ${({ $active, $faint }) => ($active ? '#fff' : $faint ? '#bbb' : '#333')};

  &:last-child { border-right: 0; }
`;

const NumberSegment = styled(Segment)`
  width: ${({ $digits }) => ({ 3: 20, 4: 25 }[$digits] || 17)}px;
  font-size: 11px;
`;

const CountInput = styled.input`
  width: 31px;
  margin-left: 1px;
  padding-left: 1px;
  border: 1px solid #888;
`;

const Total = styled.span`
  width: 33px;
  line-height: 20px;
  color: #555;
`;

const CheckLabel = styled.label`
  display: flex;
  align-items: center;
  gap: 3px;
  padding-left: 1px;

  input {
    width: 13px;
    height: 13px;
    appearance: none;
    border: 1px solid #888;
    background: #fff;
  }
`;

const InfoRow = styled.div`
  flex: none;
  height: 20px;
  display: flex;
  gap: 2px;
  margin: 3px 0;
`;

const Quote = styled.div`
  display: flex;
  align-items: center;
  width: 750px;
  border: 1px solid #888;
  background: #f0f0f0;
`;

const Cell = styled.span`
  flex: none;
  width: ${({ $width }) => $width}px;
  padding-right: ${({ $line }) => ($line ? 2 : 0)}px;
  border-right: ${({ $line }) => ($line ? '1px solid #bbb' : '0')};
  color: ${({ $up }) => ($up ? '#e81a0a' : '#111')};
  text-align: right;
  white-space: nowrap;
`;

const OrderButton = styled.button`
  width: 40px;
  border: 1px solid #888;
  background: ${({ $color }) => $color};
  color: #000;
`;

const ChartFrame = styled.section`
  flex: 1;
  min-height: 0;
  display: grid;
  grid-template-columns: 42px 1fr 47px;
  grid-template-rows: 1fr 141px 18px;
  border: 1px solid #909090;
  background: #fff;
`;

const Axis = styled.div`
  position: relative;
  min-height: 0;
  overflow: hidden;
  border-top: ${({ $sub }) => ($sub ? '1px solid #909090' : '0')};
  border-${({ $side }) => ($side === 'left' ? 'right' : 'left')}: 1px solid #909090;
`;

const AxisLabels = styled.ol`
  height: 100%;
  display: flex;
  flex-direction: column;
  justify-content: space-between;
  align-items: ${({ $side }) => ($side === 'left' ? 'flex-end' : 'flex-start')};
  margin: 0;
  padding: ${({ $top, $bottom }) => `${$top}px 0 ${$bottom}px`};
  padding-left: ${({ $side }) => ($side === 'left' ? 0 : 8)}px;
  padding-right: ${({ $sub, $side }) => ($side === 'right' ? 0 : $sub ? 4 : 1)}px;
  list-style: none;
  color: #444;
  white-space: nowrap;
`;

const TickSvg = styled.svg`
  position: absolute;
  top: 0;
  ${({ $side }) => ($side === 'left' ? 'right' : 'left')}: 0;
  width: 42px;
  height: 100%;
`;

const CursorTag = styled.div`
  position: absolute;
  top: 78%;
  left: ${({ $side }) => ($side === 'left' ? 1 : 3)}px;
  width: ${({ $side }) => ($side === 'left' ? 38 : 43)}px;
  height: 29px;
  border: 1px solid #000;
  background: #ffdb70;
  line-height: 13px;
  color: #444;
  text-align: center;
  white-space: nowrap;

  span, em { display: block; font-style: normal; }
  em { color: #ff0000; font-size: ${({ $side }) => ($side === 'left' ? 12 : 11)}px; }
`;

const PriceTag = styled.div`
  position: absolute;
  top: 89%;
  left: 3px;
  width: ${({ $side }) => ($side === 'left' ? 34 : 40)}px;
  line-height: 13px;
  color: #e81a0a;
  text-align: center;

  strong {
    display: block;
    background: #e81a0a;
    color: #fff;
    font-weight: 400;
  }
  em { display: block; font-style: normal; }
`;

const RangeNote = styled.div`
  position: absolute;
  top: 1px;
  left: 0;
  line-height: 12px;
  color: #1a5fd0;
  white-space: nowrap;

  em, span { display: block; font-style: normal; }
  em { color: #e81a0a; }
`;

const Plot = styled.div`
  position: relative;
  min-width: 0;
  min-height: 0;
  border-top: ${({ $sub }) => ($sub ? '1px solid #909090' : '0')};
`;

const PlotSvg = styled.svg`
  display: block;
  width: 100%;
  height: 100%;
  shape-rendering: crispEdges;
`;

const Legend = styled.div`
  position: absolute;
  top: 1px;
  left: 3px;
  display: flex;
  align-items: center;
  gap: 3px;
  height: 15px;
  padding-right: 2px;
  background: linear-gradient(to right, transparent 8px, #eee 8px);
  color: #333;
  font-size: 13px;
  box-shadow: inset 0 -1px #bbb, inset -1px 0 #bbb;

  i {
    width: 5px;
    height: 6px;
    margin-right: 2px;
    border: 1px solid #777;
    background: #aaa;
  }
`;

const ChartNote = styled.span`
  position: absolute;
  white-space: nowrap;
`;

const HighNote = styled(ChartNote)`
  top: 5%;
  left: 2%;
  color: #ff0000;
`;

const OpenNote = styled(ChartNote)`
  top: calc(41% + 4px);
  right: 4px;
  color: #00ff00;
`;

const LowNote = styled(ChartNote)`
  top: 93%;
  right: 11%;
  color: #0000d0;
`;

const CloseSub = styled.button`
  position: absolute;
  top: 3px;
  right: 3px;
  width: 8px;
  height: 8px;
  display: flex;
  align-items: center;
  justify-content: center;
  border: 0;
  background: #333;
  color: #fff;
`;

const TimeAxis = styled.div`
  position: relative;
  display: grid;
  grid-template-columns: 91fr repeat(36, 95fr) 120fr;
  min-width: 0;
  border-top: 1px solid #909090;
`;

const TimeCell = styled.span`
  min-width: 0;
  padding-left: 1px;
  border-left: 1px solid #909090;
  color: #444;
  font-weight: ${({ $bold }) => ($bold ? 700 : 400)};
  white-space: nowrap;
`;

const TimeTag = styled.output`
  position: absolute;
  top: -1px;
  left: 57.3%;
  min-width: 136px;
  padding: 0 1px;
  border: 1px solid #000;
  background: #ffdb70;
  color: #444;
  text-align: center;
  white-space: nowrap;
`;

const TimeCorner = styled.div`
  padding-left: 7px;
  border-top: 1px solid #909090;
  border-left: ${({ $last }) => ($last ? '1px solid #909090' : '0')};
  color: #444;
  white-space: nowrap;
`;

const BottomBar = styled.footer`
  flex: none;
  height: 20px;
  display: flex;
  align-items: flex-start;
  padding-top: 1px;
  background: #f0f0f0;
`;

const ScrollButton = styled.button`
  flex: none;
  width: 17px;
  height: 16px;
  display: flex;
  align-items: center;
  justify-content: center;
  border: 1px solid;
  border-color: #fff #808080 #808080 #fff;
  background: #f0f0f0;
  color: #000;
  font-size: 8px;
`;

const ScrollTrack = styled.div`
  flex: 1;
  height: 16px;
  border: 1px solid;
  border-color: #fff #808080 #707070 #fff;
  background: #eee;
`;

const Speed = styled.div`
  width: 80px;
  height: 18px;
  padding: 2px 4px;
  background: repeating-linear-gradient(to right, #000 0 1px, transparent 1px 7px) no-repeat 6px 13px / 70px 3px;

  input {
    display: block;
    width: 72px;
    height: 8px;
    appearance: none;
    background: linear-gradient(#888, #888) no-repeat center / 100% 2px;
  }
  input::-webkit-slider-thumb {
    appearance: none;
    width: 4px;
    height: 11px;
    border: 1px solid #888;
    background: #eee;
  }
`;

const BottomTool = styled.button`
  flex: none;
  width: 17px;
  height: 17px;
  display: flex;
  align-items: center;
  justify-content: center;
  border: 0;
  background: ${({ $on }) => ($on ? '#fff' : 'none')};
  color: #606060;
  font-family: "Liberation Sans", sans-serif;
  font-size: 15px;
  font-weight: 700;
`;

export default App;
